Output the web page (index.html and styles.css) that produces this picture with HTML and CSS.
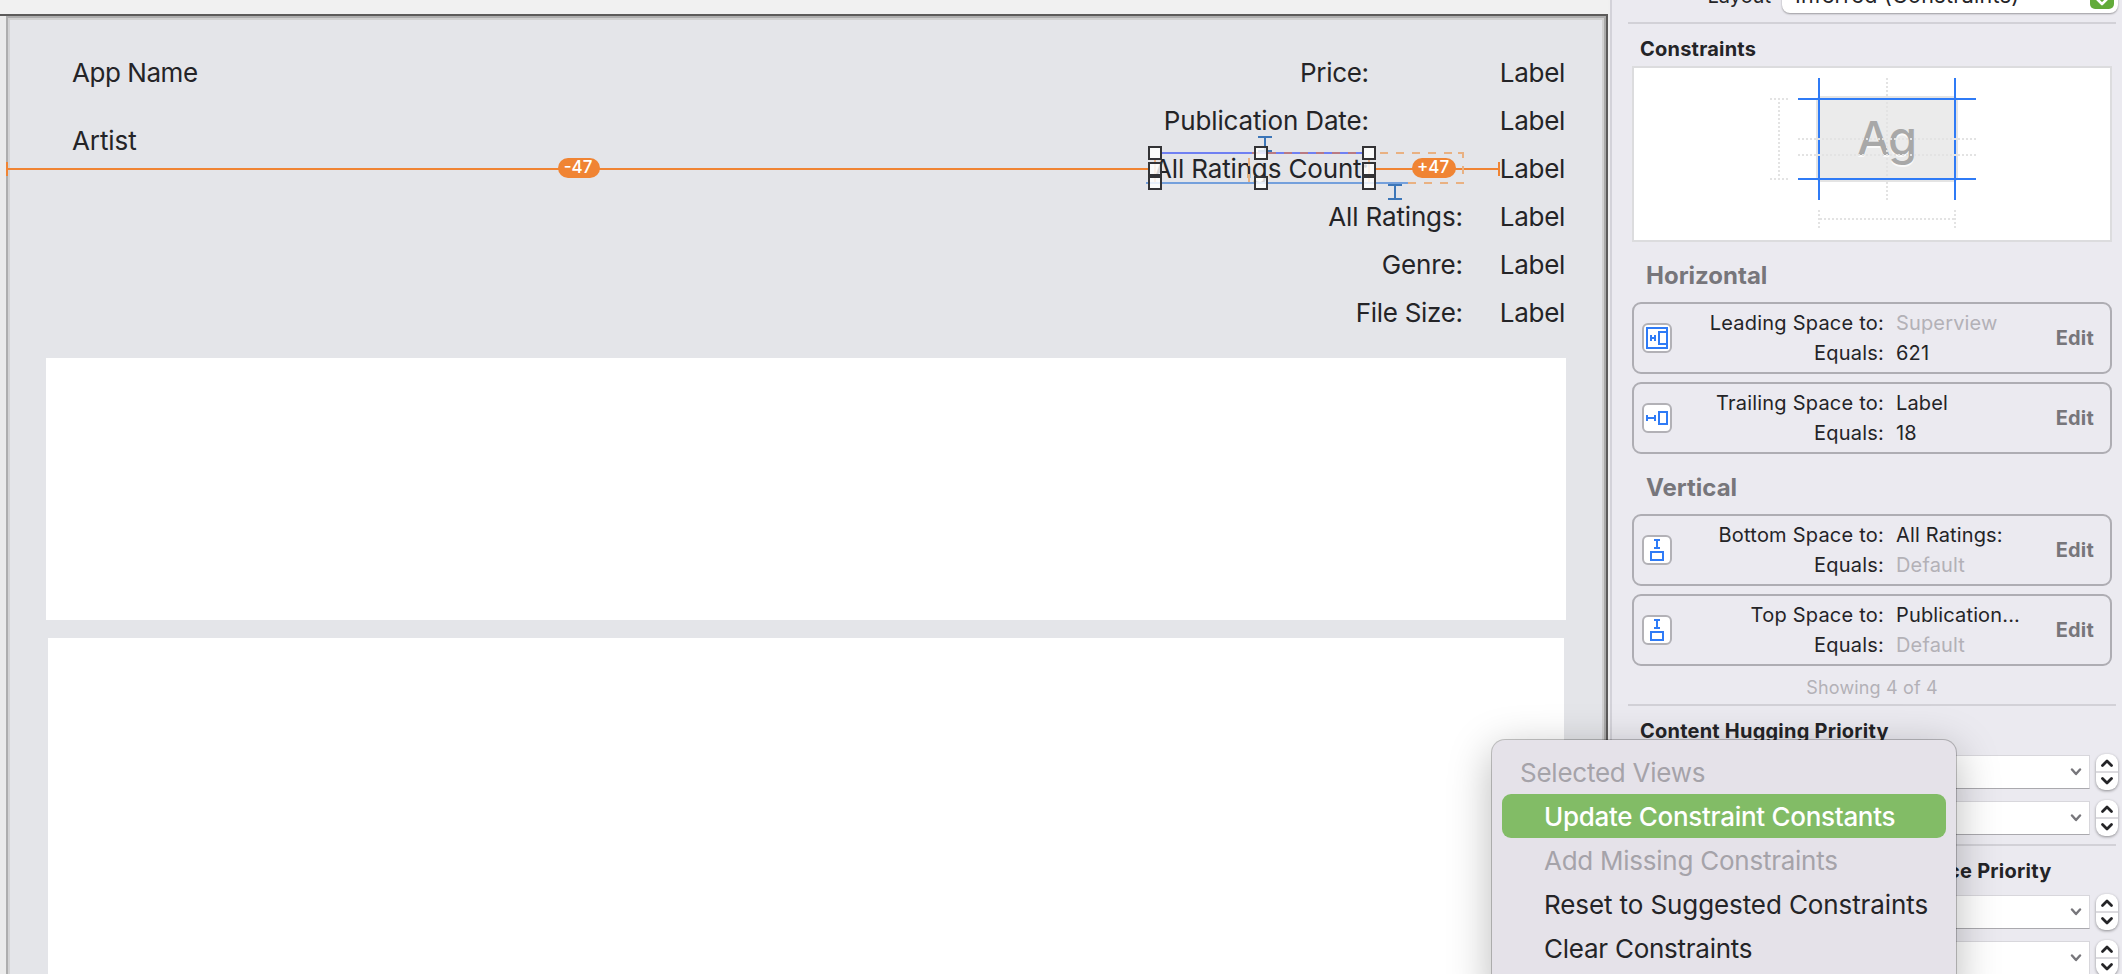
FILE: index.html
```html
<!DOCTYPE html>
<html lang="en">
<head>
<meta charset="utf-8">
<title>Interface Builder</title>
<link rel="stylesheet" href="styles.css">
</head>
<body>
<div class="app">
  <main class="canvas">
    <section class="view">
      <header class="info">
        <div class="names">
          <span class="app-name">App Name</span>
          <span class="artist">Artist</span>
        </div>
        <div class="facts">
          <div class="fact short"><span class="k k-price">Price:</span><span class="v">Label</span></div>
          <div class="fact short"><span class="k k-date">Publication Date:</span><span class="v">Label</span></div>
          <div class="fact short"><span class="k k-count">All Ratings Count:</span><span class="v">Label</span></div>
          <div class="fact"><span class="k k-all">All Ratings:</span><span class="v">Label</span></div>
          <div class="fact"><span class="k k-genre">Genre:</span><span class="v">Label</span></div>
          <div class="fact"><span class="k k-size">File Size:</span><span class="v">Label</span></div>
        </div>
      </header>
      <div class="block first"></div>
      <div class="block second"></div>
    </section>
    <svg class="overlay" width="1608" height="220" viewBox="0 0 1608 220" shape-rendering="crispEdges">
      <g fill="#f08433">
        <rect x="6" y="162" width="2" height="14"/>
        <rect x="8" y="168" width="1142" height="2"/>
        <rect x="1374" y="168" width="125" height="2"/>
        <rect x="1498" y="162" width="2" height="14"/>
      </g>
      <rect x="1160" y="152" width="204" height="2" fill="#6f80f2"/>
      <path d="M1252 153h112" stroke="#b97a82" stroke-width="2" stroke-dasharray="8 8" fill="none"/>
      <rect x="1146" y="182" width="264" height="2" fill="#74a0dc"/>
      <g stroke="#e9b182" stroke-width="2" fill="none">
        <path d="M1380 153h78" stroke-dasharray="8 8"/>
        <path d="M1458 153h5v5M1463 166v8M1249 158v8M1249 174v8M1155 160v22M1369 160v22"/>
        <path d="M1408 183h8M1424 183h8M1440 183h8M1456 183h8"/>
      </g>
      <g fill="#3c76b8">
        <path d="M1258 136h14v2h-6v12h6v2h-14v-2h6v-12h-6z"/>
        <path d="M1388 184h14v2h-6v12h6v2h-14v-2h6v-12h-6z"/>
      </g>
      <g fill="#fff" fill-opacity=".82" stroke="#333336" stroke-width="2">
        <rect x="1149" y="147" width="12" height="12"/><rect x="1149" y="163" width="12" height="12"/><rect x="1149" y="177" width="12" height="12"/>
        <rect x="1255" y="147" width="12" height="12"/><rect x="1255" y="177" width="12" height="12"/>
        <rect x="1363" y="147" width="12" height="12"/><rect x="1363" y="163" width="12" height="12"/><rect x="1363" y="177" width="12" height="12"/>
      </g>
    </svg>
    <span class="badge minus">-47</span>
    <span class="badge plus">+47</span>
  </main>

  <aside class="inspector">
    <div class="layout-row">
      <span class="layout-label">Layout</span>
      <div class="popup"><span class="popup-text">Inferred (Constraints)</span>
        <svg class="popup-btn" width="24" height="26" viewBox="0 0 24 26"><rect width="24" height="26" rx="5" fill="#62ab3a"/><path d="M7.500 8l4.500-4 4.500 4M7.500 16.500l4.500 4.500 4.500-4.500" fill="none" stroke="#fff" stroke-width="2.600" stroke-linecap="round" stroke-linejoin="round"/></svg>
      </div>
    </div>
    <hr class="sep">
    <h2 class="head h-con">Constraints</h2>
    <div class="diagram">
      <svg width="476" height="172" viewBox="1634 68 476 172">
        <rect x="1817" y="97" width="140" height="84" rx="4" fill="#ebebeb" stroke="#e4e4e4" stroke-width="2"/>
        <text class="ag ag-light" x="1886" y="157" text-anchor="middle">Ag</text>
        <text class="ag" x="1886" y="155" text-anchor="middle">Ag</text>
        <g fill="none" stroke="#2f7bf6" stroke-width="2" shape-rendering="crispEdges">
          <path d="M1819 78v122M1955 78v122M1798 99h178M1798 179h178"/>
        </g>
        <g fill="none" stroke="#e3e3e3" stroke-width="2" stroke-dasharray="2 2" shape-rendering="crispEdges">
          <path d="M1887 78v20M1887 102v76M1887 182v18M1798 139h178M1798 155h178M1770 99h18M1770 179h18M1779 102v76M1820 219h134M1819 210v18M1955 210v18"/>
        </g>
      </svg>
    </div>

    <h3 class="sub s-h">Horizontal</h3>
    <div class="cards">
      <div class="card">
        <svg class="ico" width="30" height="30" viewBox="0 0 30 30"><rect x="1" y="1" width="28" height="28" rx="5" fill="#fff" stroke="#b2b1b6" stroke-width="2"/><path d="M5 5h20v20h-20zM25 9h-8v12h8M9 12v6M13 12v6M9 15h4" fill="none" stroke="#2f7bf6" stroke-width="2"/></svg>
        <dl><dt>Leading Space to:</dt><dd class="dim">Superview</dd><dt>Equals:</dt><dd>621</dd></dl>
        <button class="edit">Edit</button>
      </div>
      <div class="card">
        <svg class="ico" width="30" height="30" viewBox="0 0 30 30"><rect x="1" y="1" width="28" height="28" rx="5" fill="#fff" stroke="#b2b1b6" stroke-width="2"/><path d="M17 9h8v12h-8zM5 12v6M13 12v6M5 15h8" fill="none" stroke="#2f7bf6" stroke-width="2"/></svg>
        <dl><dt>Trailing Space to:</dt><dd>Label</dd><dt>Equals:</dt><dd>18</dd></dl>
        <button class="edit">Edit</button>
      </div>
    </div>

    <h3 class="sub s-v">Vertical</h3>
    <div class="cards">
      <div class="card">
        <svg class="ico" width="30" height="30" viewBox="0 0 30 30"><rect x="1" y="1" width="28" height="28" rx="5" fill="#fff" stroke="#b2b1b6" stroke-width="2"/><path d="M12 5h6M12 13h6M15 5v8M9 17h12v8h-12z" fill="none" stroke="#2f7bf6" stroke-width="2"/></svg>
        <dl><dt>Bottom Space to:</dt><dd>All Ratings:</dd><dt>Equals:</dt><dd class="dim">Default</dd></dl>
        <button class="edit">Edit</button>
      </div>
      <div class="card">
        <svg class="ico" width="30" height="30" viewBox="0 0 30 30"><rect x="1" y="1" width="28" height="28" rx="5" fill="#fff" stroke="#b2b1b6" stroke-width="2"/><path d="M12 5h6M12 13h6M15 5v8M9 17h12v8h-12z" fill="none" stroke="#2f7bf6" stroke-width="2"/></svg>
        <dl><dt>Top Space to:</dt><dd>Publication...</dd><dt>Equals:</dt><dd class="dim">Default</dd></dl>
        <button class="edit">Edit</button>
      </div>
    </div>
    <p class="showing">Showing 4 of 4</p>
    <hr class="sep">

    <h2 class="head h-hug">Content Hugging Priority</h2>
    <div class="fields">
      <div class="field"><div class="combo"><svg width="12" height="8" viewBox="0 0 12 8"><path d="M2 1.500l4 4.500 4-4.500" /></svg></div><div class="stepper"><svg width="22" height="36" viewBox="0 0 22 36"><path d="M0 18h22" class="mid"/><path d="M6.500 11.500l4.500-4.500 4.500 4.500M6.500 24.500l4.500 4.500 4.500-4.500"/></svg></div></div>
      <div class="field"><div class="combo"><svg width="12" height="8" viewBox="0 0 12 8"><path d="M2 1.500l4 4.500 4-4.500" /></svg></div><div class="stepper"><svg width="22" height="36" viewBox="0 0 22 36"><path d="M0 18h22" class="mid"/><path d="M6.500 11.500l4.500-4.500 4.500 4.500M6.500 24.500l4.500 4.500 4.500-4.500"/></svg></div></div>
    </div>
    <hr class="sep">
    <h2 class="head h-res">Content Compression Resistance Priority</h2>
    <div class="fields">
      <div class="field"><div class="combo"><svg width="12" height="8" viewBox="0 0 12 8"><path d="M2 1.500l4 4.500 4-4.500" /></svg></div><div class="stepper"><svg width="22" height="36" viewBox="0 0 22 36"><path d="M0 18h22" class="mid"/><path d="M6.500 11.500l4.500-4.500 4.500 4.500M6.500 24.500l4.500 4.500 4.500-4.500"/></svg></div></div>
      <div class="field"><div class="combo"><svg width="12" height="8" viewBox="0 0 12 8"><path d="M2 1.500l4 4.500 4-4.500" /></svg></div><div class="stepper"><svg width="22" height="36" viewBox="0 0 22 36"><path d="M0 18h22" class="mid"/><path d="M6.500 11.500l4.500-4.500 4.500 4.500M6.500 24.500l4.500 4.500 4.500-4.500"/></svg></div></div>
    </div>
  </aside>

  <div class="menu">
    <div class="title">Selected Views</div>
    <div class="item active">Update Constraint Constants</div>
    <div class="item off">Add Missing Constraints</div>
    <div class="item reset">Reset to Suggested Constraints</div>
    <div class="item clear">Clear Constraints</div>
  </div>
</div>
</body>
</html>
```
FILE: styles.css
```css
* { box-sizing: border-box; }
html, body { margin: 0; height: 974px; overflow: hidden; }
body { font-family: Inter, "Liberation Sans", sans-serif; color: #242427; background: #f0f0f0; }

.app { position: relative; display: grid; grid-template-columns: 1608px 1fr; height: 974px; overflow: hidden; }

.canvas { position: relative; display: flex; flex-direction: column; height: 974px; padding: 14px 0 0; background: linear-gradient(#f1f1f1 0 14px, #ebebeb 14px); overflow: hidden; }
.canvas::before { content: ""; height: 2px; flex: none; background: #5c5b5a; }
.view { flex: 1; margin: 0 2px 0 6px; border: solid #aeaeae; border-width: 2px 2px 0; border-right-color: #aaaaa9; box-shadow: inset 0 2px #d0d0d0, inset 2px 0 #d3d3d4, inset -2px 0 #d1d1d1, 2px 0 #5c5b5a; background: #e4e5e9; display: flex; flex-direction: column; }

.info { display: flex; justify-content: space-between; height: 340px; padding: 31px 39px 0 64px; font-size: 26px; letter-spacing: -0.3px; white-space: nowrap; }
.names { display: flex; flex-direction: column; gap: 20px; line-height: 48px; }
.facts { display: flex; flex-direction: column; }
.fact { display: flex; justify-content: flex-end; gap: 37px; line-height: 48px; }
.fact.short { gap: 131px; }
.app-name { letter-spacing: -0.45px; }
.artist { letter-spacing: -0.1px; }
.k-date, .k-count, .k-all { letter-spacing: -0.15px; }
.k-genre { letter-spacing: -0.15px; }
.block { flex: none; background: #fff; }
.first { height: 262px; margin: 0 38px 18px 38px; }
.second { height: 340px; margin: 0 40px 0 40px; }

.overlay { position: absolute; left: 0; top: 0; }
.badge { position: absolute; top: 158px; height: 20px; border-radius: 10px; background: #f08433; color: #fff; font-size: 17px; font-weight: 500; line-height: 18px; text-align: center; }
.minus { left: 558px; width: 42px; padding-right: 2px; }
.plus { left: 1412px; width: 44px; padding-right: 2px; }

.inspector { margin-left: 2px; border-left: 2px solid #d3d2d9; padding: 0 6px 0 16px; background: #ebeaf0; height: 974px; overflow: hidden; font-size: 20px; }
.sep { margin: 0; border: 0; height: 2px; background: #d2d1d7; }
.layout-row { display: flex; justify-content: flex-end; gap: 11px; height: 34px; margin: -21px -2px 9px 0; line-height: 34px; }
.popup { display: flex; justify-content: space-between; align-items: center; width: 336px; padding: 0 4px 0 13px; border-radius: 8px; background: #fff; box-shadow: 0 1px 2px rgba(0,0,0,.35); white-space: nowrap; }
.popup-text { font-size: 21.5px; letter-spacing: .3px; padding-bottom: 2px; }
.head { margin: 0; padding: 8px 0 0 12px; height: 42px; line-height: 34px; font-size: 20px; font-weight: 650; letter-spacing: .22px; white-space: nowrap; }
.diagram { height: 176px; margin: 0 4px; border: 2px solid #dcdcde; background: #fff; }
.diagram svg { display: block; }
.ag { font-size: 47px; fill: #a8a8a8; letter-spacing: -2px; font-weight: 500; }
.ag-light { fill: #fafafa; }
.sub { margin: 0; padding: 7px 0 0 18px; height: 60px; line-height: 54px; font-size: 24px; font-weight: 700; color: #77767b; }
.cards { display: flex; flex-direction: column; gap: 8px; margin: 0 4px; }
.card { display: flex; align-items: center; height: 72px; padding: 0 16px 0 8px; border: 2px solid #aeadb3; border-radius: 9px; }
.ico { flex: none; }
.card dl { display: grid; grid-template-columns: 212px 1fr; column-gap: 12px; flex: 1; margin: 0; line-height: 30px; height: 60px; white-space: nowrap; }
dt { text-align: right; letter-spacing: .22px; }
dd { margin: 0; letter-spacing: .15px; }
.dim { color: #b3b1b7; }
.edit { border: 0; padding: 0; background: none; font: 700 20px/30px Inter, sans-serif; letter-spacing: .2px; color: #77767b; }
.showing { margin: 0; height: 38px; padding: 5px 0 0; line-height: 33px; font-size: 18px; letter-spacing: .15px; text-align: center; color: #b3b1b7; }

.fields { display: flex; flex-direction: column; gap: 12px; padding: 7px 0 9px; }
.field { display: flex; align-items: center; justify-content: space-between; height: 34px; margin-right: -2px; }
.combo { display: flex; align-items: center; justify-content: flex-end; width: 400px; margin-left: 62px; height: 34px; padding-right: 7px; background: #fff; border: 1px solid #d8d7dc; border-bottom-color: #aaa9ae; }
.combo path { fill: none; stroke: #77767b; stroke-width: 2.400; stroke-linecap: round; stroke-linejoin: round; }
.stepper { width: 22px; height: 36px; border-radius: 9px; background: #fff; box-shadow: 0 1px 3px rgba(0,0,0,.4); }
.stepper svg { display: block; }
.stepper path { fill: none; stroke: #242427; stroke-width: 2.800; stroke-linecap: round; stroke-linejoin: round; }
.stepper .mid { stroke: #dcdbdf; stroke-width: 2; }

.menu { position: absolute; left: 1492px; top: 740px; width: 464px; height: 260px; padding: 10px; border-radius: 13px; background: #e5e2e9; box-shadow: 0 0 0 1px rgba(0,0,0,.22), 0 10px 44px rgba(0,0,0,.28); font-size: 26px; line-height: 42px; white-space: nowrap; letter-spacing: -0.25px; }
.title { padding: 2px 0 0 18px; color: #a5a3a9; }
.item { padding: 2px 0 0 42px; border-radius: 9px; }
.active { background: #82bc66; color: #fff; font-weight: 500; letter-spacing: -0.3px; }
.off { color: #a5a3a9; }
.reset { letter-spacing: -0.1px; }
```
